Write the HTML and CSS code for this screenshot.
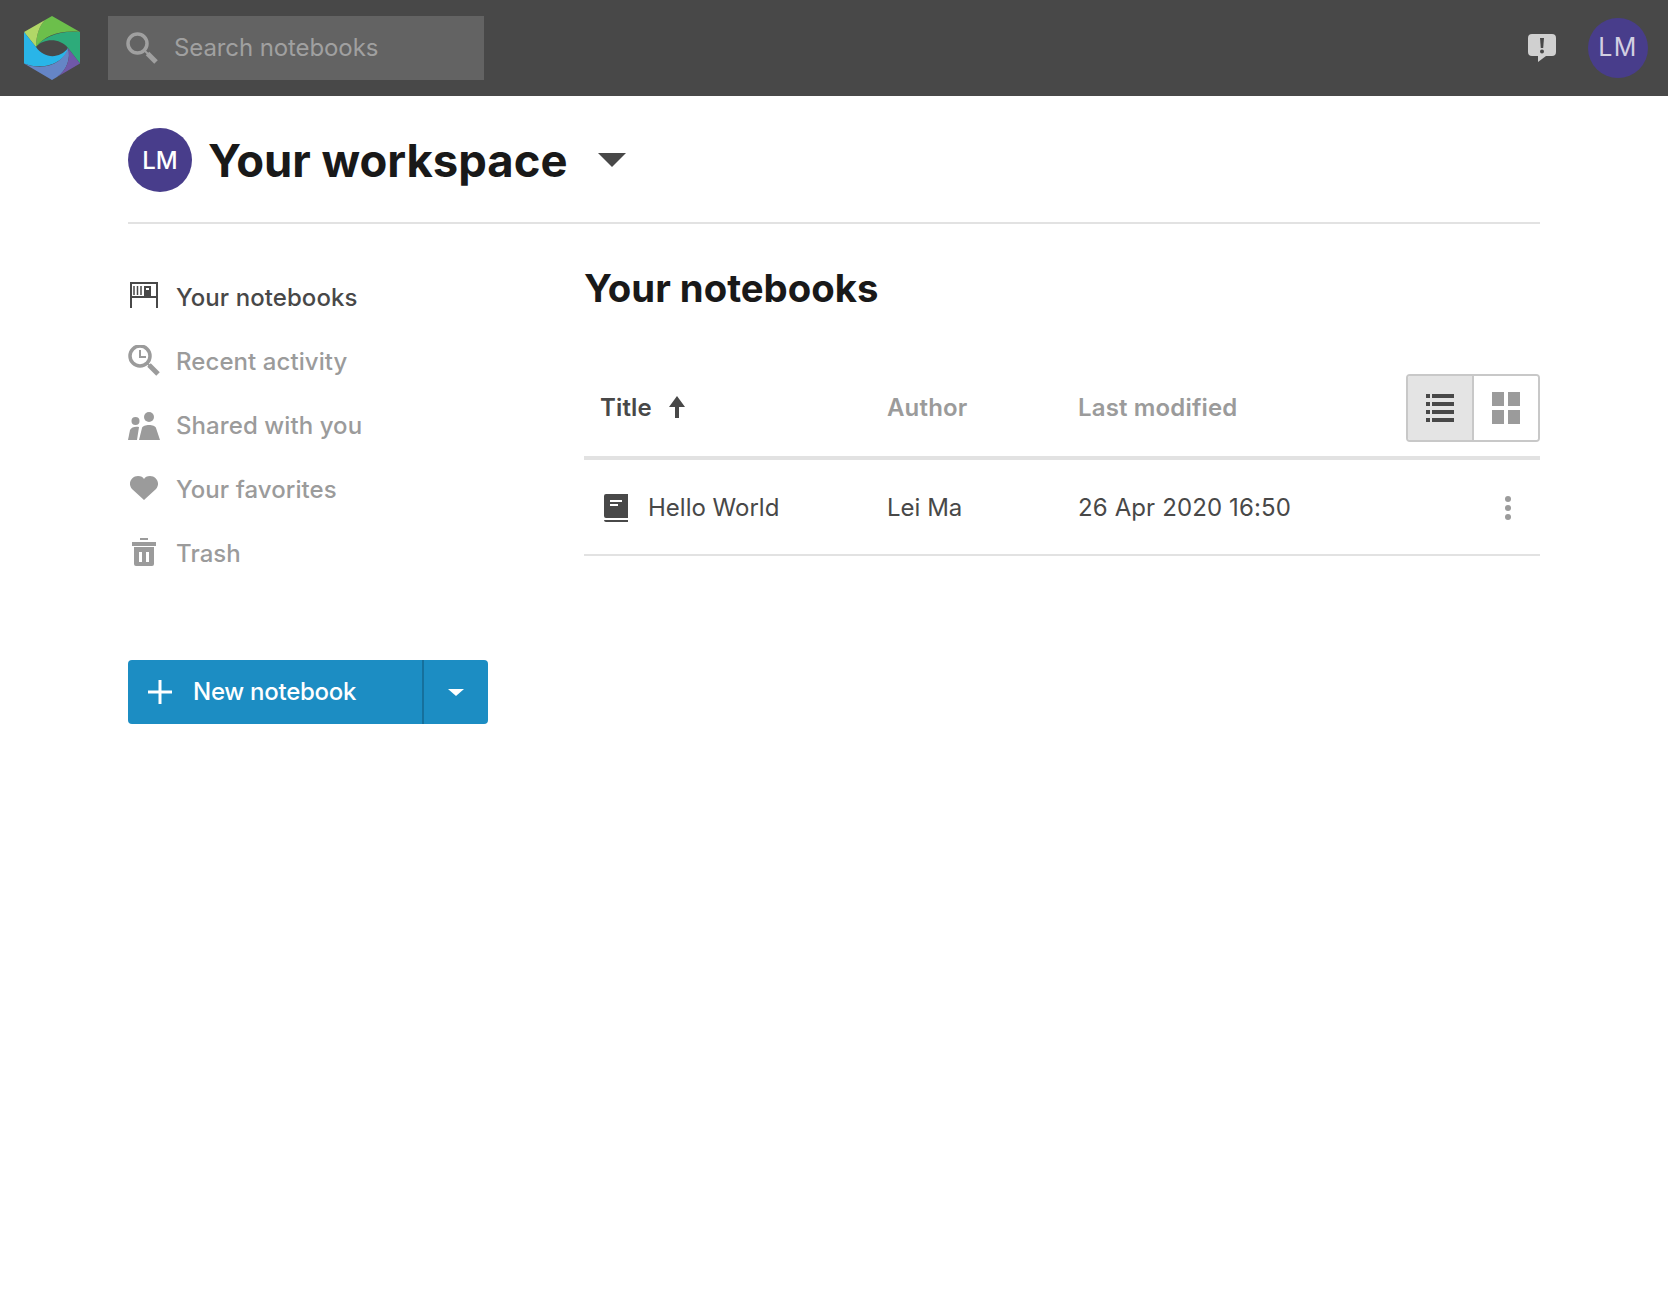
FILE: index.html
```html
<!DOCTYPE html>
<html>

<head>
    <title>Your workspace</title>
    <link rel="stylesheet" href="styles.css">
</head>

<body>
    <header class="topbar">
        <svg class="logo" width="56" height="64" viewBox="0 0 56 64">
            <path fill="#2dab7a" d="M56 16V47.5L44 32C36 22 20 22 12 31C18 22 34 14 56 16Z" />
            <path fill="#6cbf4b" d="M21 4L28 0L56 16C36 14 20 20 12 31C12 20 15 10 21 4Z" />
            <path fill="#b1d767" d="M0 16L21 4C15 10 12 20 12 31Z" />
            <path fill="#29b5e8" d="M0 16L12 31C20 43 36 43 44 32C43 44 22 56 0 47.5Z" />
            <path fill="#6585c6" d="M0 47.5C22 56 40 46 44 32C47 42 43 54 33 61L28 64Z" />
            <path fill="#7058a8" d="M44 32L56 47.5L33 61C43 54 47 42 44 32Z" />
        </svg>
        <div class="search">
            <svg width="32" height="32" viewBox="0 0 32 32">
                <circle cx="11.5" cy="11.5" r="9.5" fill="none" stroke="#a0a0a0" stroke-width="3.5" />
                <path d="M18 18L22 22" stroke="#a0a0a0" stroke-width="2" />
                <path d="M21.5 21.5L30 30" stroke="#a0a0a0" stroke-width="5" />
            </svg>
            <span class="search-text">Search notebooks</span>
        </div>
        <div class="topbar-right">
            <svg width="28" height="28" viewBox="0 0 28 28">
                <path fill="#d0d0d0" d="M4 0H24A4 4 0 0 1 28 4V18A4 4 0 0 1 24 22H18L10 28V22H4A4 4 0 0 1 0 18V4A4 4 0 0 1 4 0Z" />
                <path fill="#484848" d="M12 4H16L15.2 14H12.8Z" />
                <circle cx="14" cy="17.5" r="2" fill="#484848" />
            </svg>
            <div class="avatar avatar-small">LM</div>
        </div>
    </header>

    <div class="page">
        <div class="workspace">
            <div class="avatar">LM</div>
            <h1>Your workspace</h1>
            <span class="caret-big"></span>
        </div>

        <div class="columns">
            <aside class="sidebar">
                <nav>
                    <a class="nav-item selected" href="#">
                        <svg width="32" height="32" viewBox="0 0 32 32">
                            <path fill="none" stroke="#484848" stroke-width="2" d="M3 27V2H29V27M3 16H29" />
                            <path stroke="#484848" stroke-width="1.5" d="M6 5V14M9.5 5V14M13 5V14" />
                            <path fill="#484848" d="M16 5H23V15H16Z" />
                            <path fill="#fff" d="M18 7H21V9H18Z" />
                        </svg>
                        Your notebooks
                    </a>
                    <a class="nav-item" href="#">
                        <svg width="32" height="32" viewBox="0 0 32 32">
                            <circle cx="12" cy="11" r="10" fill="none" stroke="#9b9b9b" stroke-width="3.5" />
                            <path fill="none" stroke="#9b9b9b" stroke-width="2" d="M12 5V12H18" />
                            <path stroke="#9b9b9b" stroke-width="2" d="M19 18L22 21" />
                            <path stroke="#9b9b9b" stroke-width="5" d="M21 20L30 29" />
                        </svg>
                        Recent activity
                    </a>
                    <a class="nav-item" href="#">
                        <svg width="32" height="32" viewBox="0 0 32 32">
                            <circle cx="21" cy="8" r="5" fill="#9b9b9b" />
                            <circle cx="7.5" cy="12" r="4" fill="#9b9b9b" />
                            <path fill="#9b9b9b" d="M11 31L14 19C15 15 27 15 28 19L32 31Z" />
                            <path fill="#9b9b9b" d="M0 31L2 21C3 18 8 17 11 18L9 31Z" />
                        </svg>
                        Shared with you
                    </a>
                    <a class="nav-item" href="#">
                        <svg width="32" height="32" viewBox="0 0 32 32">
                            <path fill="#9b9b9b" d="M16 27L4 16C-1 10 4 3 10 3C13 3 15 4 16 6C17 4 19 3 22 3C28 3 33 10 28 16Z" />
                        </svg>
                        Your favorites
                    </a>
                    <a class="nav-item" href="#">
                        <svg width="32" height="32" viewBox="0 0 32 32">
                            <path fill="#9b9b9b" fill-rule="evenodd" d="M12 1H20V3H12ZM4 5H28V9H4ZM6 10H26V27A2 2 0 0 1 24 29H8A2 2 0 0 1 6 27ZM11 15V25H14V15ZM18 15V25H21V15Z" />
                        </svg>
                        Trash
                    </a>
                </nav>

                <div class="new-btn">
                    <span class="new-main">
                        <svg width="24" height="24" viewBox="0 0 24 24">
                            <path stroke="#fff" stroke-width="3" d="M12 0V24M0 12H24" />
                        </svg>
                        <span class="new-label">New notebook</span>
                    </span>
                    <span class="new-drop"><span class="caret-small"></span></span>
                </div>
            </aside>

            <main class="content">
                <h2>Your notebooks</h2>

                <div class="table-head">
                    <div class="col-title">Title
                        <svg width="16" height="22" viewBox="0 0 16 22">
                            <path fill="#484848" d="M8 0L16 11H10V22H6V11H0Z" />
                        </svg>
                    </div>
                    <div class="head-label">Author</div>
                    <div class="head-label">Last modified</div>
                    <div class="view-toggle">
                        <button class="view-btn active">
                            <svg width="28" height="28" viewBox="0 0 28 28">
                                <path fill="#484848" d="M0 0H4V4H0ZM6 0H28V4H6ZM0 8H4V12H0ZM6 8H28V12H6ZM0 16H4V20H0ZM6 16H28V20H6ZM0 24H4V28H0ZM6 24H28V28H6Z" />
                            </svg>
                        </button>
                        <button class="view-btn">
                            <svg width="28" height="32" viewBox="0 0 28 32">
                                <path fill="#9b9b9b" d="M0 0H12V14H0ZM16 0H28V14H16ZM0 18H12V32H0ZM16 18H28V32H16Z" />
                            </svg>
                        </button>
                    </div>
                </div>

                <div class="table-row">
                    <div class="col-name">
                        <svg class="book" width="24" height="28" viewBox="0 0 24 28">
                            <path fill="#484848" fill-rule="evenodd" d="M2 0H24V24H2A2 2 0 0 1 0 22V2A2 2 0 0 1 2 0ZM6 6V8H18V6ZM6 10V12H14V10ZM0 26H24V28H2A2 2 0 0 1 0 26Z" />
                        </svg>
                        Hello World
                    </div>
                    <div>Lei Ma</div>
                    <div class="col-date">26 Apr 2020 16:50</div>
                    <div class="more"><i></i><i></i><i></i></div>
                </div>
            </main>
        </div>
    </div>
</body>

</html>
```

FILE: styles.css
```css
body {
    margin: 0;
    background-color: #ffffff;
    font-family: Inter, "Liberation Sans", sans-serif;
    color: #484848;
}

h1,
h2 {
    margin: 0;
    color: #191919;
    font-weight: 700;
}

/* top bar */

.topbar {
    display: flex;
    align-items: center;
    height: 96px;
    padding: 0 20px 0 24px;
    background-color: #484848;
}

.logo {
    flex: none;
}

.search {
    display: flex;
    align-items: center;
    gap: 16px;
    width: 376px;
    height: 64px;
    margin-left: 28px;
    padding-left: 18px;
    box-sizing: border-box;
    background-color: #636363;
    color: #a0a0a0;
    font-size: 24px;
    letter-spacing: -0.1px;
}

.search-text {
    margin-bottom: 2px;
}

.topbar-right {
    display: flex;
    align-items: center;
    gap: 32px;
    margin-left: auto;
}

/* avatars */

.avatar {
    display: flex;
    align-items: center;
    justify-content: center;
    flex: none;
    width: 64px;
    height: 64px;
    border-radius: 50%;
    background-color: #483d8b;
    color: #ffffff;
    font-size: 24px;
    font-weight: 500;
}

.avatar-small {
    width: 60px;
    height: 58px;
    padding-bottom: 2px;
    color: #d2cfe2;
    font-size: 25px;
    font-weight: 400;
    letter-spacing: 1.5px;
}

/* workspace header */

.page {
    margin: 0 128px;
}

.workspace {
    display: flex;
    align-items: center;
    height: 128px;
    padding-top: 2px;
    box-sizing: border-box;
    border-bottom: 2px solid #e2e2e2;
}

.workspace h1 {
    margin-left: 16px;
    font-size: 45.4px;
}

.caret-big {
    width: 0;
    height: 0;
    margin-left: 31px;
    border-left: 14px solid transparent;
    border-right: 14px solid transparent;
    border-top: 14px solid #484848;
}

.columns {
    display: flex;
}

/* sidebar */

.sidebar {
    flex: none;
    width: 456px;
    padding-top: 41px;
}

.nav-item {
    display: flex;
    align-items: center;
    gap: 16px;
    height: 64px;
    color: #9b9b9b;
    font-size: 24px;
    font-weight: 500;
    letter-spacing: 0.08px;
    text-decoration: none;
}

.nav-item.selected {
    color: #484848;
}

.new-btn {
    display: flex;
    width: 360px;
    height: 64px;
    margin-top: 75px;
    border-radius: 4px;
    background-color: #1c8dc3;
    color: #ffffff;
    font-size: 24px;
    font-weight: 500;
    letter-spacing: -0.27px;
}

.new-main {
    display: flex;
    align-items: center;
    gap: 21px;
    width: 296px;
    padding-left: 20px;
    box-sizing: border-box;
    border-right: 2px solid #16709c;
}

.new-label {
    margin-bottom: 2px;
}

.new-drop {
    display: flex;
    align-items: center;
    justify-content: center;
    flex: 1;
}

.caret-small {
    width: 0;
    height: 0;
    border-left: 8px solid transparent;
    border-right: 8px solid transparent;
    border-top: 7px solid #ffffff;
}

/* notebooks table */

.content {
    flex: 1;
}

.content h2 {
    margin-top: 41px;
    font-size: 38.3px;
    line-height: 46px;
}

.table-head,
.table-row {
    display: grid;
    grid-template-columns: 287px 191px 1fr auto;
    align-items: center;
    padding-left: 16px;
}

.table-head {
    height: 68px;
    margin-top: 63px;
    padding-bottom: 14px;
    border-bottom: 4px solid #e2e2e2;
    color: #9b9b9b;
    font-size: 24px;
    font-weight: 600;
    letter-spacing: 0.15px;
}

.head-label {
    margin-bottom: 2px;
}

.col-title {
    display: flex;
    align-items: center;
    gap: 17px;
    margin-bottom: 2px;
    color: #484848;
}

.view-toggle {
    display: flex;
    width: 134px;
    height: 68px;
    box-sizing: border-box;
    border: 2px solid #c8c8c8;
    border-radius: 4px;
}

.view-btn {
    display: flex;
    align-items: center;
    justify-content: center;
    flex: 1;
    padding: 0;
    border: none;
    background-color: #ffffff;
    border-radius: 0 2px 2px 0;
}

.view-btn.active {
    flex: none;
    width: 66px;
    border-right: 2px solid #c8c8c8;
    border-radius: 2px 0 0 2px;
    background-color: #e4e4e4;
}

.table-row {
    height: 94px;
    border-bottom: 2px solid #e2e2e2;
    font-size: 24px;
}

.col-name {
    display: flex;
    align-items: center;
    gap: 20px;
    padding-left: 4px;
}

.book {
    margin-top: 2px;
}

.col-date {
    letter-spacing: 0.12px;
}

.more {
    display: flex;
    flex-direction: column;
    gap: 3px;
    margin-top: 2px;
    margin-right: 29px;
}

.more i {
    width: 6px;
    height: 6px;
    border-radius: 50%;
    background-color: #9b9b9b;
}
```
